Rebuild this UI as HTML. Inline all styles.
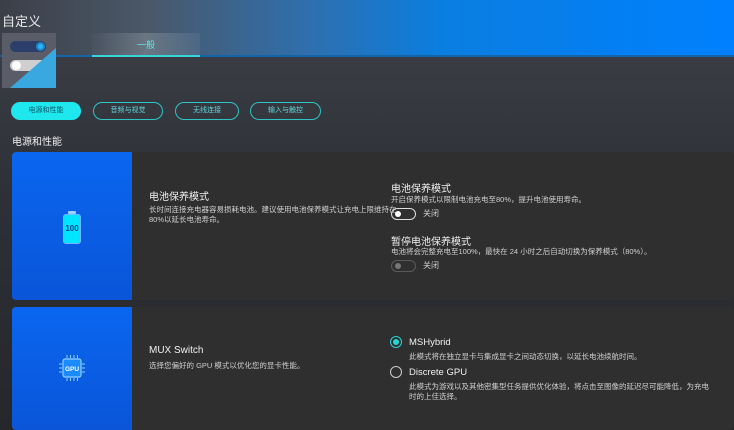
<!DOCTYPE html>
<html><head><meta charset="utf-8"><style>
*{margin:0;padding:0;box-sizing:border-box}
body{width:734px;height:430px;overflow:hidden;background:linear-gradient(180deg,#3a3c44 60px,#2e3038 200px,#25272b 430px);font-family:"Liberation Sans","Noto Sans CJK SC",sans-serif;color:#fff;position:relative}
.hdr{position:absolute;left:0;top:0;width:734px;height:57px;background:linear-gradient(90deg,#3c3f48 0%,#4a5868 20%,#2f6fae 42%,#0a7ee0 60%,#0080ff 100%)}
.hdr:after{content:"";position:absolute;left:0;right:0;bottom:0;height:2px;background:#1664a8}
.t{position:absolute;font-size:13px;left:2px;top:11px;color:#e8e8e8}
.logo{position:absolute;left:2px;top:33px;width:54px;height:55px;background:#5a5d68}
.logo .tri{position:absolute;right:0;bottom:0;width:0;height:0;border-left:46px solid transparent;border-bottom:40px solid #3aa8e0}
.tab{position:absolute;left:92px;top:33px;width:108px;height:24px;background:linear-gradient(90deg,rgba(255,255,255,0.02),rgba(255,255,255,0.18),rgba(255,255,255,0.05));font-size:9px;color:#5fe6e6;text-align:center;line-height:24px}
.tab:after{content:"";position:absolute;left:0;right:0;bottom:0;height:2px;background:#35d5d5}
.pill{position:absolute;top:102px;height:18px;border:1.5px solid #2cc4c4;border-radius:9px;font-size:7px;color:#5ed8d8;text-align:center;line-height:15px}
.sec{position:absolute;left:12px;top:133px;font-size:10px;color:#eee}
.card{position:absolute;left:12px;right:0;background:#2f2f2f;border-radius:4px;overflow:hidden}
.bl{position:absolute;left:0;top:0;bottom:0;width:120px;background:linear-gradient(180deg,#0a66f0,#0a55d8)}
.h{position:absolute;font-size:10px;color:#f0f0f0}
.s{position:absolute;font-size:7.5px;color:#d0d0d0;line-height:10px}
.tg{position:absolute;width:25px;height:12px;border:1.5px solid #ddd;border-radius:6px}
.tg:before{content:"";position:absolute;left:3px;top:2px;width:6px;height:6px;border-radius:50%;background:#fff}
.tg.off{border-color:#5a5a5a}
.tg.off:before{background:#777}
</style></head><body>
<div class="hdr"></div>
<div class="t">自定义</div>
<div class="logo">
 <div style="position:absolute;left:8px;top:8px;width:36px;height:11px;border-radius:6px;background:#2c3f6a"></div>
 <div style="position:absolute;left:34px;top:9px;width:9px;height:9px;border-radius:50%;background:#29b6f6;border:2px solid #1e88c8"></div>
 <div style="position:absolute;left:8px;top:27px;width:36px;height:11px;border-radius:6px;background:#cfcfcf"></div>
 <div style="position:absolute;left:10px;top:28px;width:9px;height:9px;border-radius:50%;background:#fff"></div>
 <div class="tri"></div>
</div>
<div class="tab">一般</div>
<div class="pill" style="left:11px;width:70px;background:#1ee8ee;border-color:#1ee8ee;color:#156;">电源和性能</div>
<div class="pill" style="left:93px;width:70px">音频与视觉</div>
<div class="pill" style="left:175px;width:64px">无线连接</div>
<div class="pill" style="left:250px;width:71px">输入与触控</div>
<div class="sec">电源和性能</div>

<div class="card" style="top:152px;height:148px">
 <div class="bl"></div>
 <div style="position:absolute;left:51px;top:62px;width:18px;height:30px;border:1.5px solid #6fb8ff;border-radius:3px;background:#00e5ff;font-size:8px;color:#0a3a8a;font-weight:bold;text-align:center;line-height:28px">100</div>
 <div style="position:absolute;left:56px;top:59px;width:8px;height:3px;background:#9cd0ff;border-radius:1px"></div>
 <div class="h" style="left:137px;top:36px">电池保养模式</div>
 <div class="s" style="left:137px;top:53px;width:248px">长时间连接充电器容易损耗电池。建议使用电池保养模式让充电上限维持在80%以延长电池寿命。</div>
 <div class="h" style="left:379px;top:28px">电池保养模式</div>
 <div class="s" style="left:379px;top:43px">开启保养模式以限制电池充电至80%，提升电池使用寿命。</div>
 <div class="tg" style="left:379px;top:56px"></div><div class="s" style="left:411px;top:57px;font-size:8px">关闭</div>
 <div class="h" style="left:379px;top:81px">暂停电池保养模式</div>
 <div class="s" style="left:379px;top:95px">电池将会完整充电至100%，最快在 24 小时之后自动切换为保养模式（80%）。</div>
 <div class="tg off" style="left:379px;top:108px"></div><div class="s" style="left:411px;top:109px;font-size:8px">关闭</div>
</div>

<div class="card" style="top:307px;height:123px">
 <div class="bl"></div>
 <svg style="position:absolute;left:45px;top:46px" width="30" height="30" viewBox="0 0 30 30"><rect x="6" y="6" width="18" height="18" rx="2" fill="#1a8cff" stroke="#8fd0ff" stroke-width="1.2"/><g stroke="#8fd0ff" stroke-width="1"><path d="M10 2v3M13.5 2v3M17 2v3M20.5 2v3M10 25v3M13.5 25v3M17 25v3M20.5 25v3M2 11h3M2 15h3M2 19h3M25 11h3M25 15h3M25 19h3"/></g><text x="15" y="18" font-size="6.5" fill="#fff" text-anchor="middle" font-weight="bold" font-family="Liberation Sans">GPU</text></svg>
 <div class="h" style="left:137px;top:38px">MUX Switch</div>
 <div class="s" style="left:137px;top:54px">选择您偏好的 GPU 模式以优化您的显卡性能。</div>
 <div style="position:absolute;left:378px;top:29px;width:12px;height:12px;border-radius:50%;border:1.5px solid #2bd3d3"></div>
 <div style="position:absolute;left:381px;top:32px;width:6px;height:6px;border-radius:50%;background:#2bd3d3"></div>
 <div class="h" style="left:397px;top:30px;font-size:9.5px">MSHybrid</div>
 <div class="s" style="left:397px;top:45px">此模式将在独立显卡与集成显卡之间动态切换，以延长电池续航时间。</div>
 <div style="position:absolute;left:378px;top:59px;width:12px;height:12px;border-radius:50%;border:1.5px solid #ccc"></div>
 <div class="h" style="left:397px;top:60px;font-size:9.5px">Discrete GPU</div>
 <div class="s" style="left:397px;top:75px;width:300px">此模式为游戏以及其他密集型任务提供优化体验，将点击至图像的延迟尽可能降低，为充电时的上佳选择。</div>
</div>
</body></html>
